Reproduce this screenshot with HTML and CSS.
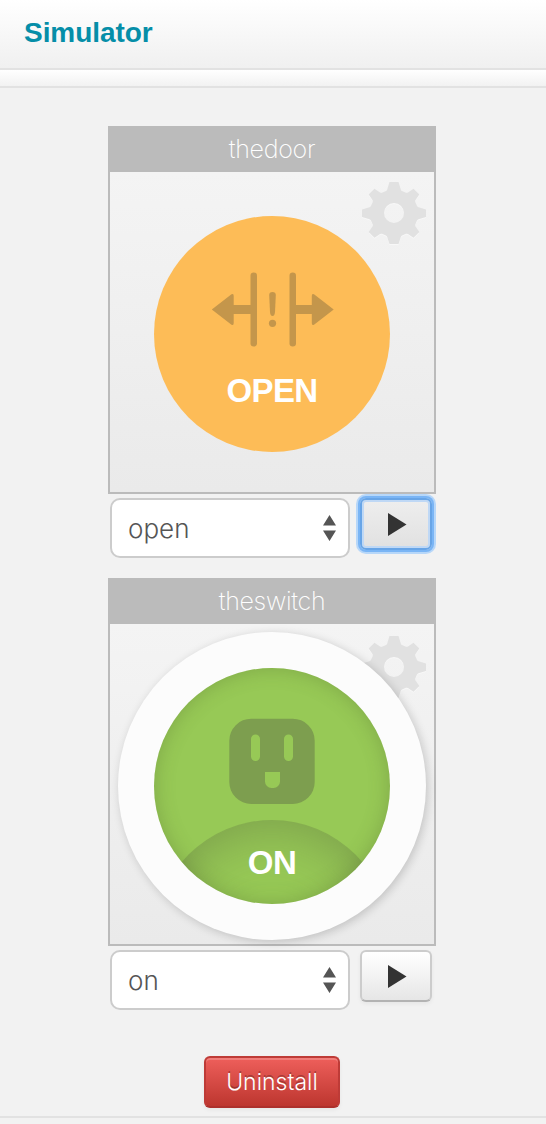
FILE: index.html
```html
<!DOCTYPE html>
<html lang="en">
<head>
<meta charset="utf-8">
<title>Simulator</title>
<link rel="stylesheet" href="styles.css">
</head>
<body>
<svg width="0" height="0" class="defs">
  <defs>
    <path id="gear-shape" fill-rule="evenodd" d="M27.500 0H36.500L38.800 7.500Q39 8.500 40 9L44 10.700Q45 11 46 10.500L51.500 6.700L57.300 12.500L53.500 18Q53 19 53.300 20L55 24Q55.500 25 56.500 25.200L64 27.500V35L56.500 37.300Q55.500 37.500 55 38.500L53.300 42.500Q53 43.500 53.500 44.500L57.300 50L51.500 55.800L46 52Q45 51.500 44 51.800L40 53.500Q39 54 38.800 55L36.500 62H27.500L25.200 55Q25 54 24 53.500L20 51.800Q19 51.500 18 52L12.500 55.800L6.700 50L10.500 44.500Q11 43.500 10.700 42.500L9 38.500Q8.500 37.500 7.500 37.300L0 35V27.500L7.500 25.200Q8.500 25 9 24L10.700 20Q11 19 10.500 18L6.700 12.500L12.500 6.700L18 10.500Q19 11 20 10.700L24 9Q25 8.500 25.200 7.500ZM32 21A10 10 0 1 0 32 41A10 10 0 1 0 32 21Z"/>
    <path id="play-shape" d="M0 0L18.500 11.500L0 23Z"/>
  </defs>
</svg>
<header class="header"><h1 class="header-title">Simulator</h1></header>
<div class="subbar"></div>
<main class="devices">
  <section class="device">
    <div class="tile">
      <h2 class="tile-title">thedoor</h2>
      <div class="tile-body">
        <svg class="gear" viewBox="0 0 64 64"><use href="#gear-shape" y="1" fill="#f8f8f8"/><use href="#gear-shape" fill="#e1e1e1"/></svg>
        <div class="dial dial-open">
          <svg class="icon" viewBox="0 0 124 90" fill="#c4964b">
            <rect x="40.500" y="4.500" width="6.500" height="74" rx="3.200"/>
            <rect x="79.500" y="4.500" width="6.500" height="74" rx="3.200"/>
            <path d="M1.800 41.500L21.500 26.300Q23.700 25 23.700 28V37H42V46H23.700V55Q23.700 58 21.500 56.700Z"/>
            <path d="M123.700 41.500L104 26.300Q101.800 25 101.800 28V37H84V46H101.800V55Q101.800 58 104 56.700Z"/>
            <path d="M59.200 27Q59.200 24 62.500 24T65.800 27L65 44Q64.700 48 62.500 48T60 44Z"/>
            <circle cx="62.500" cy="55.300" r="3.600"/>
          </svg>
          <span class="state">OPEN</span>
        </div>
      </div>
    </div>
    <div class="controls">
      <div class="select"><span>open</span><svg class="arrows" viewBox="0 0 13 26"><path d="M6.500 0L13 10.500H0ZM6.500 26L13 15.500H0Z"/></svg></div>
      <button class="play focused" aria-label="Run"><svg viewBox="0 0 20 24"><use href="#play-shape"/></svg></button>
    </div>
  </section>
  <section class="device">
    <div class="tile">
      <h2 class="tile-title">theswitch</h2>
      <div class="tile-body">
        <svg class="gear gear-low" viewBox="0 0 64 64"><use href="#gear-shape" y="1" fill="#f8f8f8"/><use href="#gear-shape" fill="#e1e1e1"/></svg>
        <div class="ring">
          <div class="dial dial-on">
            <svg class="icon" viewBox="0 0 124 90">
              <path fill="#7d9e4f" fill-rule="evenodd" d="M41.300 2.700H82.700A22 22 0 0 1 104.700 24.700V66A22 22 0 0 1 82.700 88H41.300A22 22 0 0 1 19.300 66V24.700A22 22 0 0 1 41.300 2.700ZM41 23V40.500A4.500 4.500 0 0 0 50 40.500V23A4.500 4.500 0 0 0 41 23ZM74 23V40.500A4.500 4.500 0 0 0 83 40.500V23A4.500 4.500 0 0 0 74 23ZM55 56V65.500A6.500 6.500 0 0 0 61.500 72H63.500A6.500 6.500 0 0 0 70 65.500V56Z"/>
            </svg>
            <span class="state">ON</span>
          </div>
        </div>
      </div>
    </div>
    <div class="controls">
      <div class="select"><span>on</span><svg class="arrows" viewBox="0 0 13 26"><path d="M6.500 0L13 10.500H0ZM6.500 26L13 15.500H0Z"/></svg></div>
      <button class="play" aria-label="Run"><svg viewBox="0 0 20 24"><use href="#play-shape"/></svg></button>
    </div>
  </section>
</main>
<footer class="footer"><button class="uninstall">Uninstall</button></footer>
</body>
</html>
```
FILE: styles.css
```css
* { box-sizing: border-box; }
body {
  margin: 0;
  height: 1124px;
  overflow: hidden;
  background: #f2f2f2;
  font-family: Inter, "Liberation Sans", sans-serif;
  font-weight: 300;
}
h1, h2 { margin: 0; }
.defs { display: block; }
.header {
  height: 70px;
  padding: 0 24px;
  background: linear-gradient(#fff, #f0f0f0);
  border-bottom: 2px solid #e2e2e2;
}
.header-title {
  font: bold 28px/66px "Liberation Sans", Arial, sans-serif;
  letter-spacing: -0.05px;
  color: #058ea8;
}
.subbar {
  height: 18px;
  background: linear-gradient(#fff, #f2f2f2);
  border-bottom: 2px solid #e2e2e2;
}
.devices {
  width: 328px;
  margin: 38px 0 0 108px;
  display: flex;
  flex-direction: column;
  gap: 20px;
}
.tile { border: 2px solid #bbb; height: 368px; }
.tile-title {
  height: 44px;
  background: #bbb;
  color: #fff;
  text-align: center;
  font-size: 25px;
  font-weight: 250;
  line-height: 43px;
  letter-spacing: -0.3px;
}
.tile-body {
  position: relative;
  height: 320px;
  display: flex;
  align-items: center;
  justify-content: center;
  padding-top: 4px;
  background: linear-gradient(#f4f4f4, #eaeaea);
}
.gear {
  position: absolute;
  top: 10px;
  right: 8px;
  width: 64px;
  height: 64px;
}
.gear-low { top: 12px; }
.ring {
  position: relative;
  width: 308px;
  height: 308px;
  padding: 36px;
  border-radius: 50%;
  background: #fcfcfc;
  box-shadow: 2px 2px 10px rgba(0, 0, 0, 0.18);
}
.dial {
  width: 236px;
  height: 236px;
  border-radius: 50%;
  display: flex;
  flex-direction: column;
  align-items: center;
}
.dial-open { background: #fdbc57; padding-top: 52px; }
.dial-on {
  position: relative;
  overflow: hidden;
  padding-top: 48px;
  background: #97c956;
  box-shadow: inset 0 0 20px rgba(70, 90, 40, 0.3);
}
.dial-on::before {
  content: "";
  position: absolute;
  top: 152px;
  left: 0;
  width: 236px;
  height: 236px;
  border-radius: 50%;
  box-shadow: inset 0 0 60px rgba(80, 90, 60, 0.45);
}
.icon { width: 124px; height: 90px; }
.state {
  position: relative;
  margin-top: 14px;
  font: bold 33px/38px "Liberation Sans", Arial, sans-serif;
  letter-spacing: -0.6px;
  color: #fff;
}
.dial-on .state { margin-top: 38px; }
.controls {
  display: flex;
  align-items: flex-start;
  gap: 10px;
  padding: 4px 2px 0;
}
.select {
  width: 240px;
  height: 60px;
  display: flex;
  align-items: center;
  justify-content: space-between;
  padding: 0 12px 0 16px;
  border: 2px solid #ccc;
  border-radius: 10px;
  background: #fff;
  color: #555;
  font-size: 26px;
  letter-spacing: 0;
}
.arrows { width: 13px; height: 26px; fill: #555; }
.play {
  width: 72px;
  height: 52px;
  display: flex;
  align-items: center;
  justify-content: center;
  padding: 2px 0 0 3px;
  border: 2px solid #ccc;
  border-bottom-color: #b3b3b3;
  border-radius: 6px;
  background: linear-gradient(#fff, #e6e6e6);
  box-shadow: 0 2px 4px rgba(0, 0, 0, 0.05);
}
.play svg { width: 20px; height: 24px; fill: #333; }
.play.focused {
  border: 2px solid #68a5e7;
  background: linear-gradient(#eee, #e1e1e1);
  box-shadow: inset 0 0 0 2px #bfd8f5, 0 0 0 2px #7ab5f5, 0 0 0 4px #b7d7f9;
}
.footer {
  display: flex;
  justify-content: center;
  height: 108px;
  padding: 46px 2px 0 0;
  border-bottom: 2px solid #e2e2e2;
}
.uninstall {
  width: 136px;
  height: 52px;
  padding: 0;
  border: 2px solid #be3b37;
  border-bottom-color: #ad302c;
  border-radius: 6px;
  background: linear-gradient(#ee5f5b, #bd362f);
  box-shadow: inset 0 2px 0 rgba(255, 255, 255, 0.2), 0 2px 4px rgba(0, 0, 0, 0.05);
  color: #fff;
  font: 300 23px/44px Inter, sans-serif;
  letter-spacing: 0;
  text-shadow: 0 -2px 0 rgba(0, 0, 0, 0.25);
}
```
